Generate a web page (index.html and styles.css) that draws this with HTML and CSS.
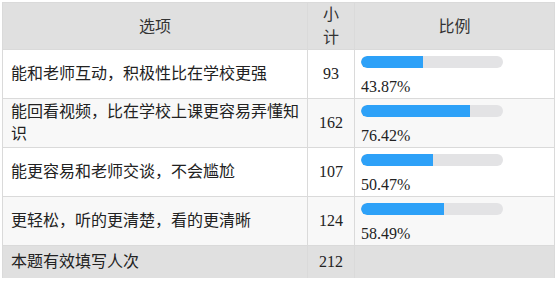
FILE: index.html
```html
<!DOCTYPE html>
<html lang="zh-CN">
<head>
<meta charset="utf-8">
<title>统计表</title>
<link rel="stylesheet" href="styles.css">
</head>
<body>
<div class="wrap">
<table class="stats">
  <colgroup>
    <col class="c-opt">
    <col class="c-cnt">
    <col class="c-pct">
  </colgroup>
  <thead>
    <tr>
      <th>选项</th>
      <th>小计</th>
      <th>比例</th>
    </tr>
  </thead>
  <tbody>
    <tr>
      <td class="opt">能和老师互动，积极性比在学校更强</td>
      <td class="cnt">93</td>
      <td class="pct"><div class="bar"><div class="fill" style="width:43.87%"></div></div><div class="num">43.87%</div></td>
    </tr>
    <tr class="alt">
      <td class="opt">能回看视频，比在学校上课更容易弄懂知识</td>
      <td class="cnt">162</td>
      <td class="pct"><div class="bar"><div class="fill" style="width:76.42%"></div></div><div class="num">76.42%</div></td>
    </tr>
    <tr>
      <td class="opt">能更容易和老师交谈，不会尴尬</td>
      <td class="cnt">107</td>
      <td class="pct"><div class="bar"><div class="fill" style="width:50.47%"></div></div><div class="num">50.47%</div></td>
    </tr>
    <tr class="alt">
      <td class="opt">更轻松，听的更清楚，看的更清晰</td>
      <td class="cnt">124</td>
      <td class="pct"><div class="bar"><div class="fill" style="width:58.49%"></div></div><div class="num">58.49%</div></td>
    </tr>
  </tbody>
  <tfoot>
    <tr>
      <td class="opt">本题有效填写人次</td>
      <td class="cnt">212</td>
      <td></td>
    </tr>
  </tfoot>
</table>
</div>
</body>
</html>
```

FILE: styles.css
```css
html, body {
  margin: 0;
  padding: 0;
  background: #ffffff;
}

.wrap {
  padding: 2px 0 0 2px;
}

.stats {
  width: 553px;
  table-layout: fixed;
  border-collapse: collapse;
  font-family: "Liberation Serif", "Noto Sans CJK SC", serif;
  font-size: 16px;
  color: #222222;
}

.c-opt { width: 305px; }
.c-cnt { width: 47px; }

.stats th,
.stats td {
  border: 1px solid #dadada;
}

.stats th {
  background: #e0e0e0;
  font-weight: normal;
  text-align: center;
  line-height: 23px;
  padding: 0 8px;
  color: #333333;
}

.stats td {
  padding: 2px 8px;
  line-height: 22px;
  vertical-align: middle;
}

.stats tbody tr.alt td {
  background: #f8f8f8;
}

.stats td.cnt {
  text-align: center;
  padding: 2px 4px;
}

.stats td.pct {
  padding: 6px 6px 1px 6px;
}

.bar {
  width: 142px;
  height: 12px;
  border-radius: 6px;
  background: #e3e3e5;
  overflow: hidden;
  margin-bottom: 9px;
}

.fill {
  height: 100%;
  background: #2da1f8;
  border-radius: 6px 0 0 6px;
}

.num {
  line-height: 20px;
}

.stats tfoot td {
  background: #e0e0e0;
  padding: 5px 8px;
  line-height: 22px;
  border-bottom: none;
}

.stats tfoot td.cnt {
  padding: 5px 4px;
}
```
